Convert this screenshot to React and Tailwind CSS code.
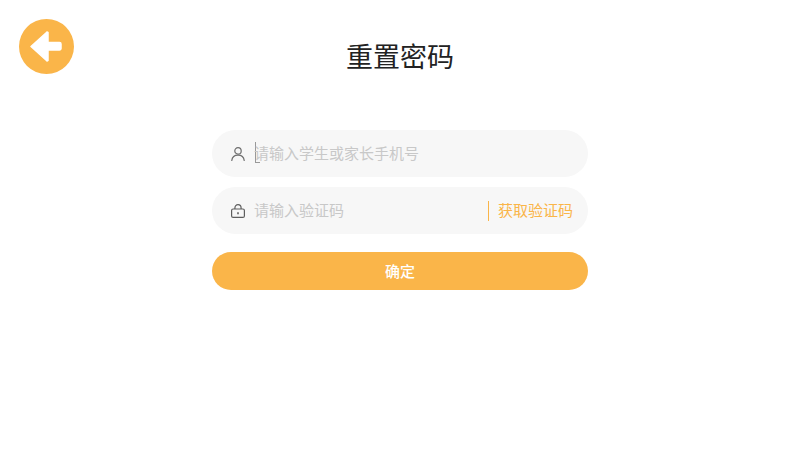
const font = { fontFamily: '"Noto Sans CJK SC", sans-serif' };

function BackIcon() {
  return (
    <svg width="55" height="55" viewBox="0 0 55 55" className="block">
      <circle cx="27.5" cy="27.5" r="27.5" fill="#fab549" />
      <path d="M12 27.5 L27.5 13.6 a0.8 0.8 0 0 1 1.5 0.6 V23.5 H40.5 a1.5 1.5 0 0 1 1.5 1.5 V29.5 a1.5 1.5 0 0 1 -1.5 1.5 H29 V40.8 a0.8 0.8 0 0 1 -1.5 0.6 Z" fill="#fff" stroke="#fff" strokeWidth="1.5" strokeLinejoin="round" />
    </svg>
  );
}

function UserIcon() {
  return (
    <svg width="14" height="14" viewBox="0 0 14 14" fill="none" stroke="#6e6e6e" strokeWidth="1.2" strokeLinecap="round" className="shrink-0">
      <circle cx="7" cy="3.9" r="3.2" />
      <path d="M0.8 13.4 C1.2 9.9 3.7 8.2 7 8.2 C10.3 8.2 12.8 9.9 13.2 13.4" />
    </svg>
  );
}

function LockIcon() {
  return (
    <svg width="14" height="14" viewBox="0 0 14 14" fill="none" stroke="#5e5e5e" strokeWidth="1.2" className="shrink-0">
      <rect x="0.6" y="5" width="12.8" height="8.4" rx="1.5" />
      <path d="M3.9 5 V4 C3.9 1.9 5.2 0.7 7 0.7 C8.8 0.7 10.1 1.9 10.1 4 V5" />
      <path d="M7 8.2 V10.2" strokeWidth="1.6" />
    </svg>
  );
}

export default function App() {
  return (
    <div className="relative h-[450px] w-[800px] overflow-hidden bg-white" style={font}>
      <div className="absolute left-[19px] top-[19px]">
        <BackIcon />
      </div>
      <h1 className="pt-[36px] text-center text-[27px] leading-[40px] font-normal text-[#222]">重置密码</h1>
      <div className="mx-auto mt-[54px] flex w-[376px] flex-col">
        <div className="flex h-[47px] items-center rounded-full bg-[#f7f7f7] pl-[19px]">
          <UserIcon />
          <div className="relative ml-[10px] text-[15px] leading-[22px] text-[#c8c8c8]">
            <span className="absolute left-0 top-[-1px] h-[20px] w-px bg-[#999]" />
            <span className="absolute left-0 top-[19px] h-px w-[5px] bg-[#999]" />
            <span className="relative top-[-1px] left-[-1px]">请输入学生或家长手机号</span>
          </div>
        </div>
        <div className="mt-[10px] flex h-[47px] items-center rounded-full bg-[#f7f7f7] pl-[19px] pr-[15px]">
          <LockIcon />
          <span className="relative top-[-1px] ml-[9px] text-[15px] leading-[22px] text-[#c8c8c8]">请输入验证码</span>
          <span className="ml-auto h-[20px] w-px bg-[#fab549]" />
          <span className="relative top-[-1px] ml-[9px] text-[15px] leading-[22px] text-[#fab549]">获取验证码</span>
        </div>
        <div className="mt-[18px] flex h-[38px] items-center justify-center rounded-full bg-[#fab549] text-[15px] font-medium text-white">确定</div>
      </div>
    </div>
  );
}
